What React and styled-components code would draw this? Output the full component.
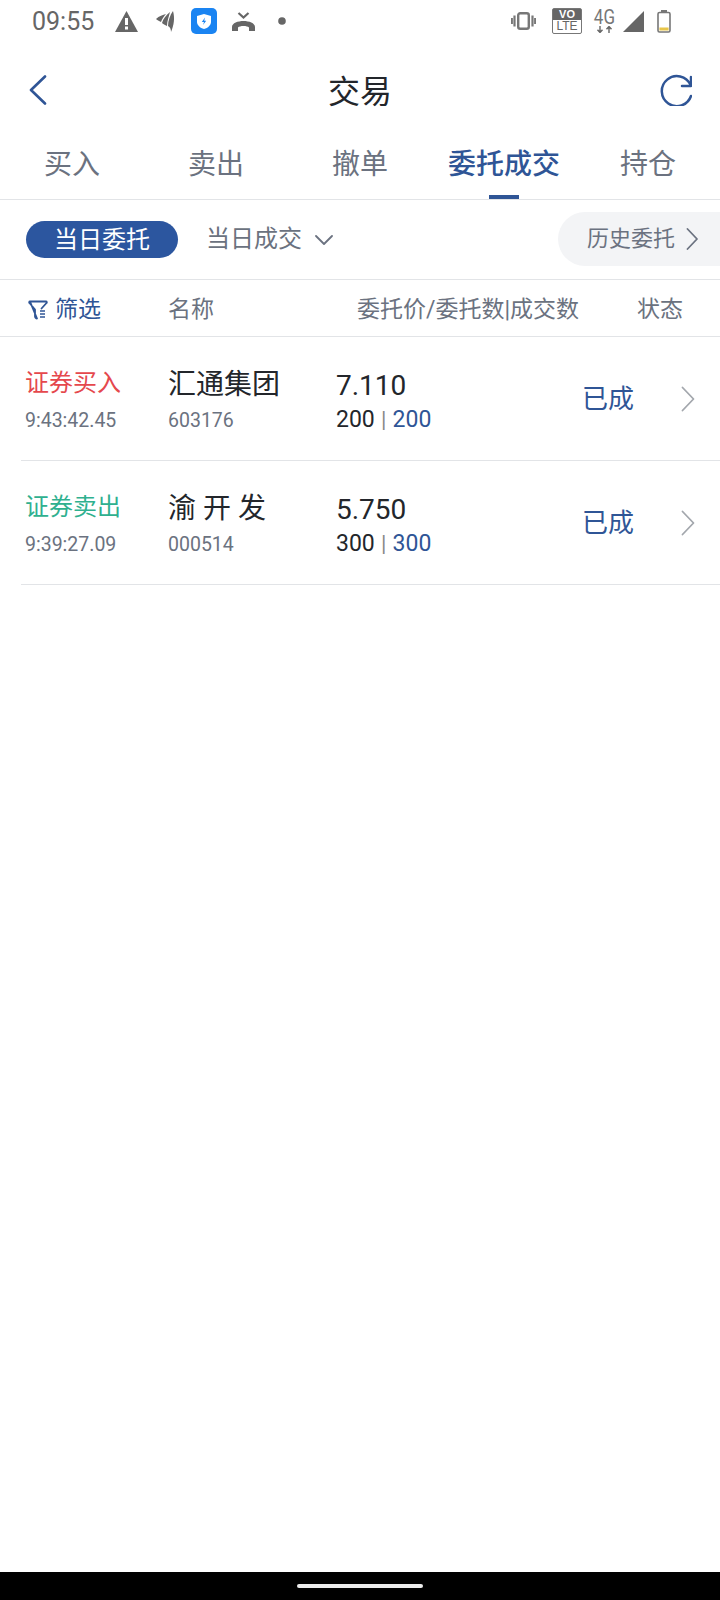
import React from 'react';
import styled, { createGlobalStyle } from 'styled-components';

const BLUE = '#2f5596';
const GREY = '#6b7280';
const INK = '#23262b';
const LINE = '#e2e4e7';

const orders = [
  { id: 1, side: '证券买入', sell: false, time: '9:43:42.45', name: '汇通集团', code: '603176', price: '7.110', qty: '200' },
  { id: 2, side: '证券卖出', sell: true, time: '9:39:27.09', name: '渝 开 发', code: '000514', price: '5.750', qty: '300' },
];

const tabs = ['买入', '卖出', '撤单', '委托成交', '持仓'];

const App = () => {
  return (
    <Page>
      <GlobalStyle />
      <StatusBar>
        <Clock>09:55</Clock>
        <StatusIcon $gap={20} width="23" height="21" viewBox="0 0 23 21">
          <path d="M11.5 0 23 21H0Z" fill="#666" />
          <rect x="10" y="7" width="3" height="7" fill="#fff" />
          <rect x="10" y="15.5" width="3" height="3" fill="#fff" />
        </StatusIcon>
        <StatusIcon $gap={18} width="19" height="21" viewBox="0 0 19 21">
          <path d="M0 8C3 5 7 4 10 3 8 5 6 8 5 11 3 10 1 9 0 8Z" fill="#666" />
          <path d="M6 12C7 8 10 4 14 1 13 5 11 10 11 15 9 14 7 13 6 12Z" fill="#666" />
          <path d="M12 15C12 10 14 4 17 0 19 7 18 14 15 21 15 18 14 16 12 15Z" fill="#666" />
        </StatusIcon>
        <StatusIcon $gap={16} width="26" height="26" viewBox="0 0 26 26">
          <rect width="26" height="26" rx="5" fill="#1a84f2" />
          <path d="M13 6 20 8V14C20 17 17 20 13 21 9 20 6 17 6 14V8Z" fill="#fff" />
          <path d="M14 9.5 10.8 14H13L12 17 15.2 12.7H13.2Z" fill="#1a84f2" />
        </StatusIcon>
        <StatusIcon $gap={15} width="23" height="19" viewBox="0 0 23 19" fill="none">
          <path d="M6.5 1 11.5 5.5 16.5 1" stroke="#666" strokeWidth="2.2" />
          <path d="M0 15C0 11 6 9 11.5 9S23 11 23 15V19H17V15.5C16 14.5 14 14 11.5 14S7 14.5 6 15.5V19H0Z" fill="#666" />
        </StatusIcon>
        <StatusIcon $gap={23} width="8" height="8" viewBox="0 0 8 8">
          <circle cx="4" cy="4" r="3.8" fill="#666" />
        </StatusIcon>
        <StatusSpacer />
        <StatusIcon width="25" height="18" viewBox="0 0 25 18" fill="none">
          <rect x="7.2" y="1.2" width="10.6" height="15.6" rx="2" stroke="#777" strokeWidth="2.4" />
          <path d="M3.5 3.5V14.5M0.8 6V12M21.5 3.5V14.5M24.2 6V12" stroke="#777" strokeWidth="2.2" />
        </StatusIcon>
        <VoBadge>
          <VoTop>VO</VoTop>
          <VoBottom>LTE</VoBottom>
        </VoBadge>
        <NetBadge>
          <NetLabel>4G</NetLabel>
          <svg width="19" height="7" viewBox="0 0 19 7" fill="none">
            <path d="M5 0V6M2.5 3.8 5 6.5 7.5 3.8M14 7V1M11.5 3.2 14 .5 16.5 3.2" stroke="#666" strokeWidth="1.4" />
          </svg>
        </NetBadge>
        <StatusIcon $gap={9} width="21" height="21" viewBox="0 0 21 21">
          <path d="M21 0V21H0Z" fill="#666" />
        </StatusIcon>
        <StatusIcon $gap={13} width="14" height="23" viewBox="0 0 14 23" fill="none">
          <rect x="4" y="0" width="6" height="2.5" fill="#777" />
          <rect x="1" y="2.5" width="12" height="19.5" rx="1.5" stroke="#777" strokeWidth="1.6" />
          <rect x="2.4" y="17.5" width="9.2" height="3" fill="#e8c64a" />
        </StatusIcon>
      </StatusBar>

      <NavBar>
        <svg width="18" height="30" viewBox="0 0 18 30" fill="none">
          <path d="M16 1.5 2 15 16 28.5" stroke={BLUE} strokeWidth="2.6" strokeLinecap="round" strokeLinejoin="round" />
        </svg>
        <NavTitle>交易</NavTitle>
        <svg width="32" height="32" viewBox="0 0 32 32" fill="none">
          <path d="M31 22A15 15 0 1 1 30.5 11" stroke={BLUE} strokeWidth="2.5" strokeLinecap="round" />
          <path d="M31 3V12H22" stroke={BLUE} strokeWidth="2.5" strokeLinecap="round" strokeLinejoin="round" />
        </svg>
      </NavBar>

      <TabBar>
        {tabs.map((tab) => (
          <Tab key={tab} $active={tab === '委托成交'}>{tab}</Tab>
        ))}
      </TabBar>

      <FilterBar>
        <ActivePill>当日委托</ActivePill>
        <Dropdown>
          当日成交
          <svg width="18" height="10" viewBox="0 0 18 10" fill="none">
            <path d="M1 1 9 9 17 1" stroke={GREY} strokeWidth="1.8" strokeLinecap="round" strokeLinejoin="round" />
          </svg>
        </Dropdown>
        <HistoryTab>
          历史委托
          <svg width="12" height="22" viewBox="0 0 12 22" fill="none">
            <path d="M1.5 1 11 11 1.5 21" stroke={GREY} strokeWidth="1.8" strokeLinecap="round" strokeLinejoin="round" />
          </svg>
        </HistoryTab>
      </FilterBar>

      <HeadRow>
        <FilterCol>
          <svg width="20" height="20" viewBox="0 0 20 20" fill="none">
            <path d="M2 1.500H18C19 1.500 19 2.500 18.500 3L13.500 8.500M9 18.500C8 18.500 7 17.500 7 16.500V9.500L1.500 3C1 2.500 1 1.500 2 1.500Z" stroke={BLUE} strokeWidth="1.8" strokeLinecap="round" strokeLinejoin="round" />
            <path d="M12 11H17M12 14H17M12 17H17" stroke={BLUE} strokeWidth="1.6" />
          </svg>
          筛选
        </FilterCol>
        <NameHead>名称</NameHead>
        <PriceHead>委托价/委托数|成交数</PriceHead>
        <StateHead>状态</StateHead>
      </HeadRow>

      {orders.map((o) => (
        <OrderRow key={o.id}>
          <SideCol>
            <SideText $sell={o.sell}>{o.side}</SideText>
            <SubText>{o.time}</SubText>
          </SideCol>
          <NameCol>
            <NameText>{o.name}</NameText>
            <CodeText>{o.code}</CodeText>
          </NameCol>
          <PriceCol>
            <PriceText>{o.price}</PriceText>
            <QtyText>
              {o.qty} <Pipe>|</Pipe> <Filled>{o.qty}</Filled>
            </QtyText>
          </PriceCol>
          <StateCol>已成</StateCol>
          <svg width="14" height="26" viewBox="0 0 14 26" fill="none">
            <path d="M1.5 1.5 12.5 13 1.5 24.5" stroke="#a3a7ad" strokeWidth="1.8" strokeLinecap="round" strokeLinejoin="round" />
          </svg>
        </OrderRow>
      ))}

      <Spacer />
      <HomeBar>
        <HomePill />
      </HomeBar>
    </Page>
  );
};

const GlobalStyle = createGlobalStyle`
  body {
    margin: 0;
    background: #fff;
    font-family: Roboto, "Noto Sans CJK SC", sans-serif;
  }
`;

const Page = styled.div`
  width: 720px;
  height: 1600px;
  display: flex;
  flex-direction: column;
  background: #fff;
  overflow: hidden;
`;

const StatusBar = styled.div`
  height: 42px;
  padding: 0 49px 0 32px;
  display: flex;
  align-items: center;
  color: #666;
`;

const Clock = styled.span`
  font-size: 25px;
  color: #666;
  width: 63px;
`;

const StatusIcon = styled.svg`
  flex: none;
  margin-left: ${(p) => p.$gap || 0}px;
`;

const StatusSpacer = styled.div`
  flex: 1;
`;

const VoBadge = styled.div`
  margin: 0 0 1px 16px;
  width: 30px;
  height: 26px;
  border: 1.5px solid #777;
  border-radius: 2px;
  box-sizing: border-box;
  display: flex;
  flex-direction: column;
  font-family: "Liberation Sans", sans-serif;
  text-align: center;
`;

const VoTop = styled.div`
  height: 11px;
  background: #666;
  color: #fff;
  font-size: 11px;
  font-weight: 700;
  line-height: 11px;
`;

const VoBottom = styled.div`
  color: #666;
  font-size: 12px;
  line-height: 13px;
`;

const NetBadge = styled.div`
  margin-left: 13px;
  width: 19px;
  display: flex;
  flex-direction: column;
  align-items: center;
`;

const NetLabel = styled.div`
  font-size: 20px;
  line-height: 17px;
  color: #777;
  transform: scaleX(0.85);
`;

const NavBar = styled.div`
  height: 88px;
  box-sizing: border-box;
  padding: 8px 28px 0 29px;
  display: flex;
  align-items: center;
`;

const NavTitle = styled.div`
  flex: 1;
  text-align: center;
  font-size: 32px;
  line-height: 40px;
  padding: 4px 0 0 13px;
  color: ${INK};
`;

const TabBar = styled.div`
  height: 70px;
  box-sizing: border-box;
  display: grid;
  grid-template-columns: repeat(5, 1fr);
  border-bottom: 1px solid ${LINE};
`;

const Tab = styled.div`
  position: relative;
  font-size: 28px;
  line-height: 70px;
  height: 69px;
  text-align: center;
  color: ${(p) => (p.$active ? BLUE : GREY)};
  font-weight: ${(p) => (p.$active ? 500 : 400)};

  &::after {
    content: '';
    display: ${(p) => (p.$active ? 'block' : 'none')};
    position: absolute;
    left: 57px;
    bottom: 0;
    width: 30px;
    height: 4px;
    background: ${BLUE};
  }
`;

const FilterBar = styled.div`
  height: 80px;
  box-sizing: border-box;
  padding-left: 26px;
  display: flex;
  align-items: center;
  border-bottom: 1px solid ${LINE};
`;

const ActivePill = styled.div`
  width: 152px;
  height: 37px;
  border-radius: 19px;
  background: #2c569f;
  color: #fff;
  font-size: 24px;
  line-height: 39px;
  text-align: center;
`;

const Dropdown = styled.div`
  margin-left: 28px;
  height: 37px;
  display: flex;
  align-items: center;
  gap: 13px;
  font-size: 24px;
  line-height: 37px;
  color: ${GREY};
`;

const HistoryTab = styled.div`
  margin: 0 0 1px auto;
  width: 162px;
  height: 54px;
  box-sizing: border-box;
  padding-left: 29px;
  border-radius: 27px 0 0 27px;
  background: #f3f4f6;
  display: flex;
  align-items: center;
  gap: 11px;
  font-size: 22px;
  line-height: 52px;
  color: ${GREY};
`;

const HeadRow = styled.div`
  height: 57px;
  box-sizing: border-box;
  display: flex;
  align-items: center;
  font-size: 23px;
  line-height: 30px;
  padding-top: 4px;
  color: ${GREY};
  border-bottom: 1px solid ${LINE};
`;

const FilterCol = styled.div`
  width: 140px;
  margin-left: 28px;
  display: flex;
  align-items: center;
  gap: 7px;
  color: ${BLUE};
`;

const NameHead = styled.div`
  width: 189px;
`;

const PriceHead = styled.div`
  width: 280px;
`;

const StateHead = styled.div``;

const OrderRow = styled.div`
  height: 124px;
  margin-left: 21px;
  padding-right: 24px;
  box-sizing: border-box;
  display: flex;
  align-items: center;
  border-bottom: 1px solid ${LINE};
`;

const SideCol = styled.div`
  width: 147px;
  padding: 6px 0 0 4px;
  box-sizing: border-box;
`;

const SideText = styled.div`
  font-size: 24px;
  line-height: 38px;
  color: ${(p) => (p.$sell ? '#2fb08f' : '#e5484d')};
`;

const SubText = styled.div`
  font-size: 19.5px;
  line-height: 38px;
  color: ${GREY};
`;

const NameCol = styled.div`
  width: 168px;
  padding-top: 8px;
  box-sizing: border-box;
`;

const NameText = styled.div`
  font-size: 28px;
  line-height: 36px;
  color: ${INK};
`;

const CodeText = styled.div`
  font-size: 19.5px;
  line-height: 36px;
  color: ${GREY};
`;

const PriceCol = styled.div`
  width: 246px;
  padding-top: 7px;
  box-sizing: border-box;
`;

const PriceText = styled.div`
  font-size: 28px;
  line-height: 35px;
  color: ${INK};
`;

const QtyText = styled.div`
  font-size: 23px;
  line-height: 33px;
  color: ${INK};
`;

const Pipe = styled.span`
  margin: 0 0.5px;
  color: #888;
  font-size: 22px;
`;

const Filled = styled.span`
  color: ${BLUE};
`;

const StateCol = styled.div`
  width: 99px;
  padding-bottom: 4px;
  box-sizing: border-box;
  font-size: 26px;
  color: ${BLUE};
`;

const Spacer = styled.div`
  flex: 1;
`;

const HomeBar = styled.div`
  height: 28px;
  background: #000;
  display: flex;
  align-items: center;
  justify-content: center;
`;

const HomePill = styled.div`
  width: 126px;
  height: 4px;
  border-radius: 2px;
  background: #ececec;
`;

export default App;
